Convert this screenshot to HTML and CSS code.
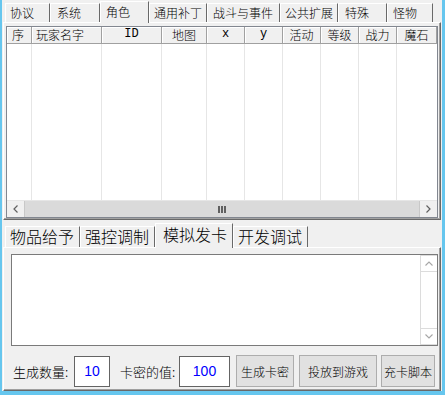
FILE: index.html
```html
<!DOCTYPE html>
<html lang="zh-CN">
<head>
  <meta charset="UTF-8">
  <title>角色</title>
  <link rel="stylesheet" href="styles.css">
</head>
<body>
  <div class="window">

    <!-- top tab strip -->
    <div class="tabs top-tabs">
      <div class="tab">协议</div>
      <div class="tab">系统</div>
      <div class="tab active">角色</div>
      <div class="tab">通用补丁</div>
      <div class="tab">战斗与事件</div>
      <div class="tab">公共扩展</div>
      <div class="tab">特殊</div>
      <div class="tab">怪物</div>
    </div>

    <div class="panel top-panel">
      <div class="listview">
        <div class="lv-row lv-head">
          <div class="col c-no left">序</div>
          <div class="col c-name left">玩家名字</div>
          <div class="col c-id latin">ID</div>
          <div class="col c-map">地图</div>
          <div class="col c-n latin">x</div>
          <div class="col c-n latin">y</div>
          <div class="col c-n">活动</div>
          <div class="col c-n">等级</div>
          <div class="col c-n">战力</div>
          <div class="col c-last">魔石</div>
        </div>
        <div class="lv-row lv-body">
          <div class="col c-no"></div>
          <div class="col c-name"></div>
          <div class="col c-id"></div>
          <div class="col c-map"></div>
          <div class="col c-n"></div>
          <div class="col c-n"></div>
          <div class="col c-n"></div>
          <div class="col c-n"></div>
          <div class="col c-n"></div>
          <div class="col c-last"></div>
        </div>
        <div class="hscroll">
          <div class="sb-btn">
            <svg width="5" height="8" viewBox="0 0 5 8"><path d="M4.5 0.5 L1 4 L4.5 7.5" fill="none" stroke="#606060" stroke-width="1.2"/></svg>
          </div>
          <div class="sb-thumb">
            <span class="grip"></span><span class="grip"></span><span class="grip"></span>
          </div>
          <div class="sb-btn">
            <svg width="5" height="8" viewBox="0 0 5 8"><path d="M0.5 0.5 L4 4 L0.5 7.5" fill="none" stroke="#606060" stroke-width="1.2"/></svg>
          </div>
        </div>
      </div>
    </div>

    <!-- bottom tab strip -->
    <div class="tabs bottom-tabs">
      <div class="tab">物品给予</div>
      <div class="tab">强控调制</div>
      <div class="tab active">模拟发卡</div>
      <div class="tab">开发调试</div>
    </div>

    <div class="panel bottom-panel">
      <div class="memo">
        <div class="memo-text"></div>
        <div class="vscroll">
          <div class="vs-btn">
            <svg width="8" height="5" viewBox="0 0 8 5"><path d="M0.5 4.5 L4 1 L7.5 4.5" fill="none" stroke="#a6a6a6" stroke-width="1.1"/></svg>
          </div>
          <div class="vs-track"></div>
          <div class="vs-btn">
            <svg width="8" height="5" viewBox="0 0 8 5"><path d="M0.5 0.5 L4 4 L7.5 0.5" fill="none" stroke="#a6a6a6" stroke-width="1.1"/></svg>
          </div>
        </div>
      </div>

      <div class="form-row">
        <span class="label">生成数量:</span>
        <div class="field f-count">10</div>
        <span class="label label-2">卡密的值:</span>
        <div class="field f-value">100</div>
        <button class="btn b-gen">生成卡密</button>
        <button class="btn b-put">投放到游戏</button>
        <button class="btn b-script">充卡脚本</button>
      </div>
    </div>

  </div>
</body>
</html>
```

FILE: styles.css
```css
* {
  box-sizing: border-box;
}

body {
  margin: 0;
  background: #66c6ee;
  font-family: "Noto Sans CJK SC", "Noto Sans", sans-serif;
  font-weight: 300;
  font-size: 12px;
  color: #000;
}

.window {
  width: 445px;
  height: 395px;
  background: #f0f0f0;
  border-left: 2px solid #66c6ee;
  border-right: 3px solid #66c6ee;
  border-bottom: 4px solid #66c6ee;
  padding: 0 1px;
  display: flex;
  flex-direction: column;
}

/* tab strips */
.tabs {
  display: flex;
  align-items: flex-end;
  padding-left: 2px;
}

.tab {
  border-top: 1px solid #fff;
  border-left: 1px solid #fff;
  border-right: 1px solid #696969;
  background: #f0f0f0;
  white-space: nowrap;
  padding-left: 4px;
}

.tab.active {
  position: relative;
  z-index: 1;
  margin-bottom: -1px;
}

.top-tabs {
  margin-top: 1px;
  height: 21px;
}

.top-tabs .tab {
  height: 19px;
  line-height: 17px;
}

.top-tabs .tab.active {
  height: 22px;
  line-height: 19px;
  padding-left: 5px;
}

.top-tabs .tab:nth-child(1) { width: 45px; }
.top-tabs .tab:nth-child(2) { width: 50px; padding-left: 6px; }
.top-tabs .tab:nth-child(3) { width: 49px; }
.top-tabs .tab:nth-child(4) { width: 58px; }
.top-tabs .tab:nth-child(5) { width: 73px; padding-left: 5px; }
.top-tabs .tab:nth-child(6) { width: 58px; }
.top-tabs .tab:nth-child(7) { width: 49px; padding-left: 6px; }
.top-tabs .tab:nth-child(8) { width: 46px; padding-left: 5px; }

.bottom-tabs {
  margin-top: 3px;
  height: 24px;
  font-size: 16px;
}

.bottom-tabs .tab {
  width: 75px;
  height: 21px;
  line-height: 19px;
}

.bottom-tabs .tab.active {
  width: 78px;
  height: 25px;
  line-height: 20px;
  padding-left: 7px;
}

/* panels */
.panel {
  border-top: 1px solid #fff;
  border-left: 1px solid #fff;
  border-right: 1px solid #696969;
  border-bottom: 1px solid #696969;
  box-shadow: inset -1px -1px #a0a0a0;
}

.top-panel {
  height: 198px;
  padding: 3px 0 0 2px;
}

.bottom-panel {
  height: 144px;
  padding: 6px 0 0 7px;
}

/* list view */
.listview {
  width: 432px;
  height: 192px;
  border: 1px solid #828790;
  background: #fff;
  display: flex;
  flex-direction: column;
}

.lv-row {
  display: flex;
}

.col {
  flex: none;
  text-align: center;
}

.col.left {
  text-align: left;
}

.c-no { width: 25px; padding-left: 5px; }
.c-name { width: 70px; padding-left: 4px; }
.c-id { width: 60px; }
.c-map { width: 45px; }
.c-n { width: 38px; }
.c-last { width: 40px; }

.lv-head {
  height: 17px;
}

.lv-head .col {
  height: 17px;
  line-height: 15px;
  background: #f0f0f0;
  border-right: 1px solid #a0a0a0;
  border-bottom: 1px solid #a0a0a0;
  box-shadow: inset 1px 1px #fff;
}

.lv-head .latin {
  font-family: "Liberation Mono", monospace;
  font-weight: 400;
  font-size: 12px;
}

.lv-body {
  flex: 1;
}

.lv-body .col {
  border-right: 1px solid #e6e6e6;
}

.lv-body .c-last {
  border-right: none;
}

.hscroll {
  height: 17px;
  display: flex;
  border-top: 1px solid #e6e6e6;
  background: #f0f0f0;
}

.sb-btn {
  width: 17px;
  display: flex;
  align-items: center;
  justify-content: center;
  background: #f0f0f0;
}

.sb-thumb {
  flex: 1;
  background: #dadada;
  border-left: 1px solid #c8c8c8;
  border-right: 1px solid #c8c8c8;
  display: flex;
  align-items: center;
  justify-content: center;
  gap: 1px;
}

.grip {
  width: 2px;
  height: 7px;
  background: #606060;
}

/* memo */
.memo {
  width: 427px;
  height: 92px;
  border: 1px solid #7a7a7a;
  background: #fff;
  display: flex;
}

.memo-text {
  flex: 1;
}

.vscroll {
  width: 17px;
  display: flex;
  flex-direction: column;
  border-left: 1px solid #dcdcdc;
}

.vs-btn {
  height: 17px;
  display: flex;
  align-items: center;
  justify-content: center;
  border-top: 1px solid #dcdcdc;
  border-bottom: 1px solid #dcdcdc;
}

.vs-track {
  flex: 1;
}

/* bottom form */
.form-row {
  display: flex;
  align-items: center;
  height: 32px;
  margin-top: 9px;
}

.label {
  font-size: 13px;
  margin-left: 2px;
  width: 61px;
}

.label-2 {
  margin-left: 10px;
  width: 59px;
}

.field {
  height: 31px;
  border: 1px solid #646464;
  background: #fff;
  color: #0000ff;
  font-family: "Liberation Sans", sans-serif;
  font-weight: 400;
  font-size: 14px;
  line-height: 29px;
  text-align: center;
}

.f-count { width: 36px; }
.f-value { width: 51px; }

.btn {
  height: 32px;
  margin-left: 6px;
  padding: 0;
  border: 1px solid #adadad;
  background: #e1e1e1;
  font-family: inherit;
  font-weight: 300;
  font-size: 12px;
  color: #000;
}

.b-gen { width: 58px; }
.b-put { width: 78px; margin-left: 5px; }
.b-script { width: 54px; margin-left: 4px; }
```
